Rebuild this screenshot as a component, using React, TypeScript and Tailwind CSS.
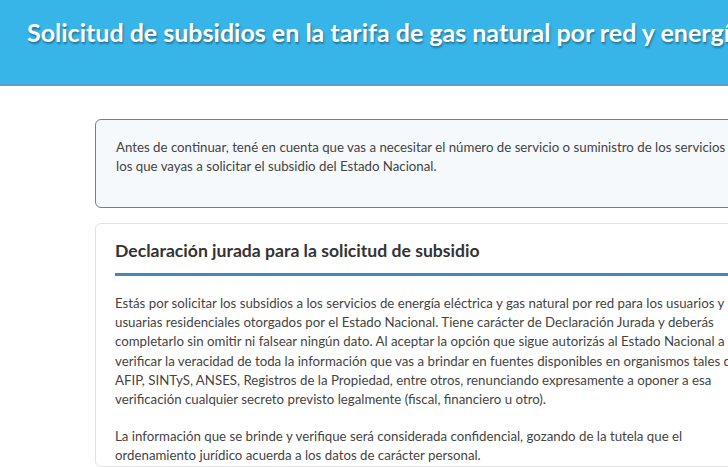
export default function App() {
  return (
    <div
      className="w-[728px] h-[467px] overflow-hidden bg-white text-[#444]"
      style={{ fontFamily: "Lato, 'Open Sans', sans-serif" }}
    >
      {/* Header */}
      <header className="h-[86px] bg-[#38b5e8] border-b-2 border-[#5c9fc8] pl-[27px] pt-[16px]">
        <h1 className="text-[25px] leading-[32px] font-bold text-white whitespace-nowrap [text-shadow:1px_2px_2px_rgba(0,0,0,0.35)]">
          Solicitud de subsidios en la tarifa de gas natural por red y energía eléctrica
        </h1>
      </header>

      <main className="pl-[95px] pt-[33px] w-[820px]">
        {/* Info notice */}
        <div className="w-[712px] rounded-md border-[1.5px] border-[#6f8190] bg-[#f5f9fc] px-5 pt-[18px] pb-[31px]">
          <p className="text-[13.25px] leading-[19px]">
            Antes de continuar, tené en cuenta que vas a necesitar el número de servicio o suministro de los servicios para
            <br />
            los que vayas a solicitar el subsidio del Estado Nacional.
          </p>
        </div>

        {/* Declaration card */}
        <section className="mt-[15px] w-[680px] rounded-md border border-[#e3e3e3] bg-white px-[19px] pt-[15px]">
          <h2 className="text-[17.6px] leading-[24px] font-bold text-[#333] pb-[10px] border-b-[3px] border-[#4088bd]">
            Declaración jurada para la solicitud de subsidio
          </h2>
          <div className="pt-[18px] text-[13.25px] leading-[19.2px]">
            <p>
              Estás por solicitar los subsidios a los servicios de energía eléctrica y gas natural por red para los usuarios y
              usuarias residenciales otorgados por el Estado Nacional. Tiene carácter de Declaración Jurada y deberás
              completarlo sin omitir ni falsear ningún dato. Al aceptar la opción que sigue autorizás al Estado Nacional a
              verificar la veracidad de toda la información que vas a brindar en fuentes disponibles en organismos tales de
              AFIP, SINTyS, ANSES, Registros de la Propiedad, entre otros, renunciando expresamente a oponer a esa
              verificación cualquier secreto previsto legalmente (fiscal, financiero u otro).
            </p>
            <p className="mt-[18px]">
              La información que se brinde y verifique será considerada confidencial, gozando de la tutela que el
              ordenamiento jurídico acuerda a los datos de carácter personal.
            </p>
          </div>
        </section>
      </main>
    </div>
  );
}
